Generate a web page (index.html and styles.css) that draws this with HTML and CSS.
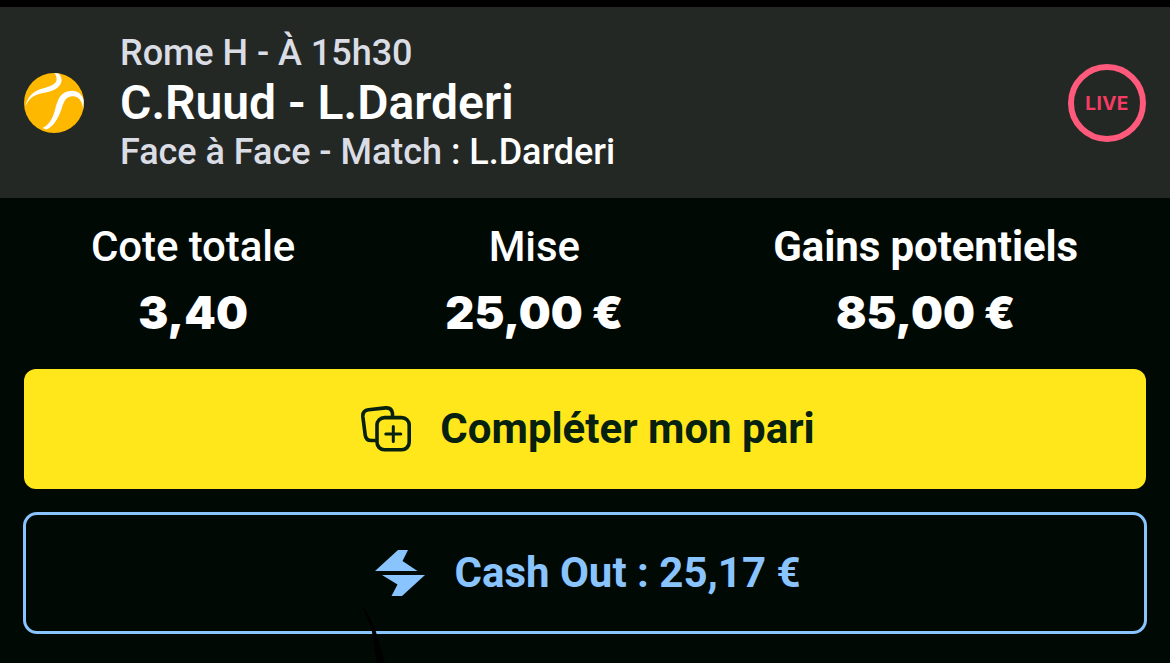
FILE: index.html
```html
<!DOCTYPE html>
<html lang="fr">
<head>
  <meta charset="UTF-8">
  <meta name="viewport" content="width=device-width, initial-scale=1.0">
  <title>Mon pari</title>
  <link rel="stylesheet" href="styles.css">
</head>
<body>
  <header class="match">
    <svg class="ball" viewBox="0 0 60 60">
      <circle cx="30" cy="30" r="30" fill="#ffb800"/>
      <path d="M1.300 34C3 24 9 18.500 17 16C27 13.500 32 11 32.500 7C33 4.500 32 2.500 30.500 0L34.500 .4C37.500 3 38.500 7 36.800 10.500C34 16 27 19 19 20C10 21.500 4 26 1.300 34Z" fill="#fff"/>
      <path d="M18.500 55C25 52 28.500 46 31 37C33.500 26 37 17.700 48 17.700C54 17.700 58 21.500 59.700 27L59.300 36C58 28 55 23.500 49 23.200C42 23 40 28 37.500 36C34 46 29 54.500 22 56.500Z" fill="#fff"/>
    </svg>
    <div class="infos">
      <div class="competition">Rome H - À 15h30</div>
      <h1 class="players">C.Ruud - L.Darderi</h1>
      <div class="bet">Face à Face - Match <span class="choice">: L.Darderi</span></div>
    </div>
    <div class="live"><span>LIVE</span></div>
  </header>

  <section class="stats">
    <div class="stat">
      <div class="label">Cote totale</div>
      <div class="value">3,40</div>
    </div>
    <div class="stat">
      <div class="label">Mise</div>
      <div class="value">25,00 €</div>
    </div>
    <div class="stat">
      <div class="label strong">Gains potentiels</div>
      <div class="value">85,00 €</div>
    </div>
  </section>

  <div class="actions">
    <button class="btn btn-complete">
      <svg class="icon-cards" viewBox="0 0 50 46" fill="none" stroke="#06210f" stroke-width="3.600" stroke-linecap="round" stroke-linejoin="round">
        <path d="M13.500 34.500H10.500C7 34.500 4.600 32.500 4.200 29L1.900 11C1.500 7 3.500 4.300 7.500 3.800L24.500 1.900C28.500 1.500 31 3.500 31.500 7.500V9.500"/>
        <rect x="16" y="11.600" width="32.200" height="32.200" rx="7.500"/>
        <path d="M32.300 20.500V35.500M24.800 28H39.800" stroke-width="3"/>
      </svg>
      <span>Compléter mon pari</span>
    </button>
    <button class="btn btn-cashout">
      <svg class="icon-flash" viewBox="0 0 50 46" fill="#8ac4ff">
        <path d="M0 21L23 0H33L27.500 11L42.500 21Z"/>
        <path d="M7 25H50L27 46H16.500L22.500 34.500Z"/>
      </svg>
      <span>Cash Out : 25,17 €</span>
    </button>
  </div>

  <svg class="streak" viewBox="0 0 30 58">
    <path d="M1 1C7 8 12 18 15 27L24 58H16L11 27C9 18 4 8 1 1Z" fill="#000"/>
  </svg>
</body>
</html>
```
FILE: styles.css
```css
* {
  box-sizing: border-box;
}

body {
  font-family: Roboto, "Liberation Sans", sans-serif;
  margin: 0;
  height: 663px;
  overflow: hidden;
  position: relative;
  background-color: #010904;
  color: #fff;
  border-top: 7px solid #000;
}

/* Header */
.match {
  display: flex;
  align-items: center;
  height: 191px;
  padding: 0 24px;
  background-color: #242825;
}

.ball {
  width: 60px;
  height: 60px;
  margin-right: 36px;
}

.infos {
  flex: 1;
  white-space: nowrap;
}

.competition,
.bet {
  font-size: 36px;
  line-height: 46px;
  font-weight: 500;
  letter-spacing: -0.03px;
  color: #dbdde5;
}

.bet {
  line-height: 45px;
}

.players {
  margin: 0;
  font-size: 48px;
  line-height: 54px;
  font-weight: 600;
}

.choice {
  color: #fff;
}

.live {
  display: flex;
  align-items: center;
  justify-content: center;
  width: 78px;
  height: 78px;
  padding-top: 2px;
  border: 6px solid #ff5a7b;
  border-radius: 50%;
  color: #f83b64;
  font-family: Inter, sans-serif;
  font-size: 19px;
  font-weight: 700;
  letter-spacing: 0.4px;
}

/* Cote, mise, gains */
.stats {
  display: flex;
  justify-content: space-between;
  height: 171px;
  padding: 24px 92px 0 91px;
}

.stat {
  text-align: center;
  white-space: nowrap;
}

.label {
  font-size: 42px;
  line-height: 50px;
  font-weight: 500;
  letter-spacing: -0.1px;
}

.label.strong {
  font-weight: 700;
}

.value {
  margin-top: 14px;
  font-family: Inter, sans-serif;
  font-size: 45px;
  line-height: 54px;
  font-weight: 900;
}

/* Boutons */
.actions {
  display: flex;
  flex-direction: column;
  gap: 23px;
  padding: 0 23px;
}

.btn {
  display: flex;
  align-items: center;
  justify-content: center;
  gap: 29px;
  font-family: inherit;
  font-size: 42px;
  font-weight: 700;
  cursor: pointer;
}

.btn span {
  padding-bottom: 1px;
}

.btn-complete {
  height: 120px;
  margin: 0 1px;
  padding: 0 0 0 6px;
  border: none;
  border-radius: 12px;
  background-color: #ffe71c;
  color: #06210f;
}

.btn-cashout {
  height: 122px;
  padding: 0 0 0 6px;
  border: 3px solid #8ac4ff;
  border-radius: 14px;
  background: none;
  color: #8ac4ff;
}

.icon-cards,
.icon-flash {
  width: 50px;
  height: 46px;
}

.streak {
  position: absolute;
  left: 361px;
  bottom: 0;
  width: 30px;
  height: 58px;
}
```
